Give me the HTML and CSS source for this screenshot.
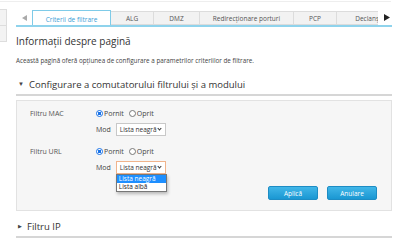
FILE: index.html
```html
<!DOCTYPE html>
<html lang="ro">
<head>
  <meta charset="UTF-8" />
  <title>Criterii de filtrare</title>
  <link rel="stylesheet" href="styles.css">
</head>
<body>
  <div class="topline"></div>
  <div class="page">
    <!-- Meniu lateral (tăiat) -->
    <div class="side">
      <div class="side-item"></div>
      <div class="side-item"></div>
    </div>

    <div class="main">
      <!-- Tab-uri -->
      <div class="tabbar">
        <span class="arrow left">
          <svg width="5" height="6" viewBox="0 0 5 6"><polygon points="5,0 5,6 0,3" fill="#aaa"/></svg>
        </span>
        <div class="tabs">
          <div class="tab active">Criterii de filtrare</div>
          <div class="tab w-alg">ALG</div>
          <div class="tab w-dmz">DMZ</div>
          <div class="tab w-redir">Redirecționare porturi</div>
          <div class="tab w-pcp">PCP</div>
          <div class="tab w-decl">Declanșare porturi</div>
        </div>
        <span class="arrow right">
          <svg width="6" height="7" viewBox="0 0 6 7"><polygon points="0,0 6,3.5 0,7" fill="#222"/></svg>
        </span>
      </div>

      <h1 class="title">Informații despre pagină</h1>
      <p class="desc">Această pagină oferă opțiunea de configurare a parametrilor criteriilor de filtrare.</p>

      <!-- Configurare -->
      <div class="section">
        <div class="section-head"><span class="caret">▼</span>Configurare a comutatorului filtrului și a modului</div>
        <div class="panel">
          <div class="row">
            <div class="label">Filtru MAC</div>
            <div class="field">
              <span class="radio checked"></span><span class="opt">Pornit</span>
              <span class="radio"></span><span class="opt">Oprit</span>
            </div>
          </div>
          <div class="row">
            <div class="label"></div>
            <div class="field">
              <span class="mod">Mod</span>
              <div class="select">Lista neagră<span class="chev"></span></div>
            </div>
          </div>

          <div class="row gap">
            <div class="label">Filtru URL</div>
            <div class="field">
              <span class="radio checked"></span><span class="opt">Pornit</span>
              <span class="radio"></span><span class="opt">Oprit</span>
            </div>
          </div>
          <div class="row">
            <div class="label"></div>
            <div class="field">
              <span class="mod">Mod</span>
              <div class="select focus">Lista neagră<span class="chev"></span>
                <ul class="dropdown">
                  <li class="sel">Lista neagră</li>
                  <li>Lista albă</li>
                </ul>
              </div>
            </div>
          </div>

          <div class="actions">
            <button class="btn">Aplică</button>
            <button class="btn">Anulare</button>
          </div>
        </div>
      </div>

      <div class="section">
        <div class="section-head closed"><span class="caret">▶</span>Filtru IP</div>
      </div>
    </div>
  </div>
</body>
</html>
```

FILE: styles.css
```css
* { box-sizing: border-box; margin: 0; padding: 0; }

body {
  font-family: "Open Sans", "Noto Sans", sans-serif;
  background: #fff;
  color: #333;
  width: 399px;
  height: 244px;
  overflow: hidden;
}

.topline {
  height: 1px;
  margin-top: 1px;
  margin-right: 8px;
  background: #eee;
}

.page {
  display: flex;
}

/* meniu lateral */
.side {
  flex-shrink: 0;
  width: 7px;
  margin-top: 7px;
  display: flex;
  flex-direction: column;
}

.side-item {
  height: 17px;
  background: #f3f3f3;
  border: 1px solid #ddd;
  border-left: none;
  margin-bottom: -1px;
}

.main {
  flex: 1;
  min-width: 0;
  padding: 0 7px 0 9px;
}

/* tab-uri */
.tabbar {
  display: flex;
  align-items: stretch;
  margin-top: 8px;
  height: 17px;
  border-bottom: 2px solid #8fd3ec;
}

.arrow {
  flex-shrink: 0;
  width: 16px;
  display: flex;
  align-items: center;
  justify-content: center;
}

.arrow.right {
  width: 14px;
  padding-left: 3px;
}

.tabs {
  flex: 1;
  min-width: 0;
  display: flex;
  overflow: hidden;
  white-space: nowrap;
}

.tab {
  flex-shrink: 0;
  overflow: hidden;
  background: #f2f2f2;
  border: 1px solid #dcdcdc;
  border-left: none;
  font-size: 6.5px;
  color: #555;
  display: flex;
  align-items: center;
  justify-content: center;
  margin-top: 1px;
}

.tab.active {
  width: 79px;
  background: #fff;
  color: #3a9ed6;
  border: 1px solid #7fcbe8;
  border-bottom: none;
  margin-top: 0;
  margin-bottom: -2px;
}

.w-alg { width: 43px; }
.w-dmz { width: 46px; }
.w-redir { width: 94px; }
.w-pcp { width: 43px; }
.w-decl { width: 94px; }

/* titlu */
.title {
  font-size: 10px;
  font-weight: normal;
  color: #333;
  line-height: 14px;
  margin-top: 7px;
}

.desc {
  font-size: 6.3px;
  line-height: 9px;
  color: #444;
  margin-top: 8px;
}

/* sectiuni */
.section-head {
  font-size: 9.5px;
  line-height: 13px;
  color: #333;
  padding: 3px 0 3px 2px;
  border-bottom: 2px solid #d6d6d6;
  margin-top: 10px;
  display: flex;
  align-items: center;
}

.section-head.closed {
  margin-top: 6px;
}

.caret {
  font-size: 6px;
  width: 11px;
  color: #444;
}

.closed .caret {
  width: 9px;
  font-size: 5px;
}

.panel {
  margin-top: 4px;
  background: #f6f6f6;
  border: 1px solid #e2e2e2;
  padding: 6px 14px 10px 13px;
}

.row {
  display: flex;
  align-items: center;
  height: 12px;
}

.row + .row {
  margin-top: 4px;
  height: 13px;
}

.row.gap {
  margin-top: 9px;
  height: 12px;
}

.label {
  width: 66px;
  font-size: 7px;
  color: #555;
}

.field {
  display: flex;
  align-items: center;
  font-size: 7px;
  color: #444;
}

.radio {
  width: 7px;
  height: 7px;
  border-radius: 50%;
  border: 1px solid #777;
  background: #fff;
  margin-right: 1px;
}

.radio.checked {
  border: 1px solid #1a73e8;
  background: radial-gradient(circle, #1a73e8 0 1.6px, #fff 2px);
}

.opt {
  margin-right: 5px;
}

.mod {
  margin-right: 5px;
}

.select {
  position: relative;
  width: 50px;
  height: 13px;
  background: #fff;
  border: 1px solid #c8c8c8;
  font-size: 6.5px;
  color: #333;
  display: flex;
  align-items: center;
  padding-left: 3px;
}

.select.focus {
  border-color: #f0b48c;
}

.chev {
  position: absolute;
  right: 4px;
  top: 3px;
  width: 3px;
  height: 3px;
  border-right: 1px solid #333;
  border-bottom: 1px solid #333;
  transform: rotate(45deg);
}

.dropdown {
  position: absolute;
  left: -1px;
  top: 12px;
  width: 51px;
  list-style: none;
  background: #fff;
  border: 1px solid #777;
  box-shadow: 1px 2px 3px rgba(0,0,0,0.25);
  z-index: 5;
}

.dropdown li {
  height: 8px;
  line-height: 8px;
  padding-left: 2px;
  font-size: 6.5px;
  color: #222;
}

.dropdown li.sel {
  background: #1e8fff;
  color: #fff;
}

/* butoane */
.actions {
  display: flex;
  justify-content: flex-end;
  gap: 9px;
  margin-top: 12px;
}

.btn {
  width: 50px;
  height: 14px;
  border: 1px solid #1d8cc4;
  border-radius: 2px;
  background: linear-gradient(to bottom, #41b6e8, #1a97d2);
  color: #fff;
  font-family: inherit;
  font-size: 6.5px;
}
```
